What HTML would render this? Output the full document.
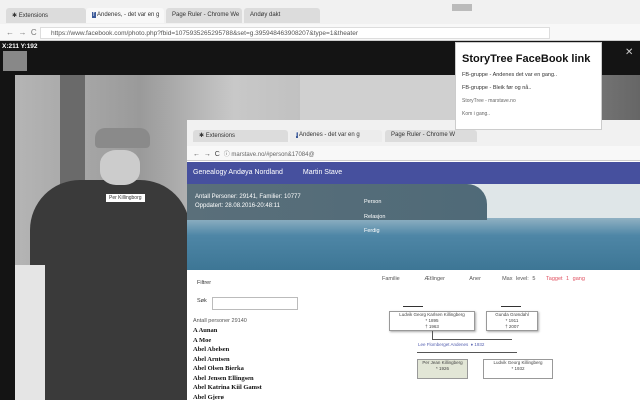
<!DOCTYPE html>
<html><head><style>
*{margin:0;padding:0;box-sizing:border-box}
body{width:640px;height:400px;overflow:hidden;position:relative;background:#141414;font-family:"Liberation Sans",sans-serif;font-size:6px}
.a{position:absolute}
.tab{position:absolute;top:8px;height:15px;background:#dcdcdc;border-radius:3px 3px 0 0;font-size:6px;color:#333;padding:4px 6px;white-space:nowrap;overflow:hidden}
</style></head><body>
<div class="a" style="left:0;top:0;width:640px;height:24px;background:#f1f1f1"></div>
<div class="tab" style="left:6px;width:80px">✱ Extensions</div>
<div class="tab" style="left:86px;width:78px;background:#f8f8f8"><span style="background:#3b5998;color:#fff;padding:0 1px">f</span> Andenes, - det var en g</div>
<div class="tab" style="left:166px;width:76px">Page Ruler - Chrome We</div>
<div class="tab" style="left:244px;width:76px">Andøy dakt</div>
<div class="a" style="left:452px;top:4px;width:20px;height:7px;background:#bbb"></div>
<div class="a" style="left:0;top:24px;width:640px;height:17px;background:#f8f8f8;border-bottom:1px solid #ccc"></div>
<div class="a" style="left:40px;top:27px;width:510px;height:12px;background:#fff;border:1px solid #ddd;font-size:6.5px;color:#555;padding:2px 10px">https://www.facebook.com/photo.php?fbid=1075935265295788&set=g.395948463908207&type=1&theater</div>
<div class="a" style="left:6px;top:28px;font-size:8px;color:#777">←&nbsp;&nbsp;→&nbsp;&nbsp;C</div>
<div class="a" style="left:2px;top:43px;color:#fff;font-size:6.5px;font-weight:bold">X:211 Y:192</div>
<div class="a" style="left:3px;top:51px;width:24px;height:20px;background:#888"></div>
<div class="a" style="left:15px;top:75px;width:625px;height:325px;background:linear-gradient(90deg,#b5b5b5 0,#9a9a9a 20%,#c8c8c8 35%,#bbb 55%,#999 75%,#666 100%)"></div>
<div class="a" style="left:60px;top:75px;width:25px;height:110px;background:#6a6a6a"></div>
<div class="a" style="left:300px;top:75px;width:160px;height:45px;background:#d0d0d0"></div>
<div class="a" style="left:30px;top:180px;width:160px;height:220px;background:#3a3a3a;border-radius:50px 50px 0 0"></div>
<div class="a" style="left:100px;top:150px;width:40px;height:35px;background:#ccc;border-radius:40%"></div>
<div class="a" style="left:95px;top:128px;width:55px;height:20px;background:#8a8a8a;border-radius:10px 10px 4px 4px"></div>
<div class="a" style="left:15px;top:265px;width:30px;height:135px;background:#e5e5e5"></div>
<div class="a" style="left:106px;top:194px;background:#fff;font-size:5px;padding:1px 3px;color:#333">Per Killingborg</div>
<div class="a" style="left:625px;top:47px;color:#ccc;font-size:10px">✕</div>
<div class="a" style="left:187px;top:120px;width:453px;height:280px;background:#fff;overflow:hidden">
 <div class="a" style="left:0;top:0;width:453px;height:26px;background:#f1f1f1"></div>
 <div class="tab" style="top:10px;left:6px;width:95px;height:12px;padding:2px 6px">✱ Extensions</div>
 <div class="tab" style="top:10px;left:103px;width:92px;height:12px;padding:2px 6px;background:#ececec"><span style="background:#3b5998;color:#fff">f</span> Andenes - det var en g</div>
 <div class="tab" style="top:10px;left:198px;width:92px;height:12px;padding:2px 6px">Page Ruler - Chrome W</div>
 <div class="a" style="left:0;top:26px;width:453px;height:15px;background:#f8f8f8;border-bottom:1px solid #ccc;font-size:7px;color:#444;padding:3px 6px">←&nbsp;&nbsp;→&nbsp;&nbsp;C&nbsp;&nbsp;<span style="font-size:6px;color:#666">ⓘ marstave.no/#person&17084@</span></div>
 <div class="a" style="left:0;top:42px;width:453px;height:22px;background:#46509e;color:#fff;font-size:7px;padding:7px 6px">Genealogy Andøya Nordland<span style="margin-left:20px">Martin Stave</span></div>
 <div class="a" style="left:0;top:64px;width:453px;height:86px;background:linear-gradient(180deg,#6a8ea8 0,#8fb0c2 40%,#4e86a6 60%,#3d7695 100%)"></div>
 <div class="a" style="left:240px;top:64px;width:213px;height:34px;background:#dfe6e8"></div>
 <div class="a" style="left:0;top:64px;width:300px;height:36px;background:linear-gradient(90deg,#5a6f7a,#4f6a78);border-radius:0 20px 0 0"></div>
 <div class="a" style="left:8px;top:73px;color:#fff;font-size:6px;line-height:9px">Antall Personer: 29141, Familier: 10777<br>Oppdatert: 28.08.2016-20:48:11</div>
 <div class="a" style="left:177px;top:75px;color:#fff;font-size:5.5px;line-height:14.5px">Person<br>Relasjon<br>Ferdig</div>
 <div class="a" style="left:0;top:150px;width:453px;height:130px;background:#fff"></div>
 <div class="a" style="left:10px;top:160px;font-size:5.5px;color:#333">Filtrer</div>
 <div class="a" style="left:10px;top:178px;font-size:5.5px;color:#333">Søk</div>
 <div class="a" style="left:25px;top:177px;width:86px;height:13px;border:1px solid #bbb"></div>
 <div class="a" style="left:6px;top:198px;font-size:5.5px;color:#555">Antall personer 29140</div>
 <div class="a" style="left:6px;top:206px;font-family:'Liberation Serif',serif;font-weight:bold;font-size:6.5px;line-height:9.5px;color:#111">A Aunan<br>A Moe<br>Abel Abelsen<br>Abel Arntsen<br>Abel Olsen Bierka<br>Abel Jensen Ellingsen<br>Abel Katrina Kiil Gamst<br>Abel Gjerø</div>
 <div class="a" style="left:195px;top:156px;font-size:5.5px;color:#555;word-spacing:2px">Familie&nbsp;&nbsp;&nbsp;&nbsp;&nbsp;&nbsp; Ætlinger&nbsp;&nbsp;&nbsp;&nbsp;&nbsp;&nbsp; Aner&nbsp;&nbsp;&nbsp;&nbsp;&nbsp; Max level: 5 &nbsp;&nbsp;<span style="color:#e05060">Tagget 1 gang</span></div>
 <div class="a" style="left:216px;top:186px;width:20px;height:1px;background:#333"></div>
 <div class="a" style="left:314px;top:186px;width:20px;height:1px;background:#333"></div>
 <div class="a" style="left:202px;top:191px;width:86px;height:20px;border:1px solid #999;box-shadow:1px 1px 2px #aaa;font-size:4.5px;text-align:center;color:#444;line-height:6px">Ludvik Georg Karlsen Killingberg<br>* 1895<br>† 1963</div>
 <div class="a" style="left:299px;top:191px;width:52px;height:20px;border:1px solid #999;box-shadow:1px 1px 2px #aaa;font-size:4.5px;text-align:center;color:#444;line-height:6px">Gunda Grøndahl<br>* 1911<br>† 2007</div>
 <div class="a" style="left:245px;top:211px;width:1px;height:8px;background:#555"></div>
 <div class="a" style="left:245px;top:219px;width:80px;height:1px;background:#555"></div>
 <div class="a" style="left:231px;top:222px;font-size:4.5px;color:#5560b0">Lee Flomberget Andenes&nbsp; ♦ 1932</div>
 <div class="a" style="left:230px;top:232px;width:100px;height:1px;background:#555"></div>
 <div class="a" style="left:230px;top:239px;width:51px;height:20px;border:1px solid #999;background:#e2e6d6;font-size:4.5px;text-align:center;color:#444;line-height:6px">Per Jean Killingberg<br>* 1926</div>
 <div class="a" style="left:296px;top:239px;width:70px;height:20px;border:1px solid #999;font-size:4.5px;text-align:center;color:#444;line-height:6px">Ludvik Georg Killingberg<br>* 1932</div>
</div>
<div class="a" style="left:455px;top:42px;width:147px;height:88px;background:#fff;border:1px solid #ccc;padding:10px 6px;color:#333">
<div style="font-size:11px;font-weight:bold;color:#111;margin-bottom:7px">StoryTree FaceBook link</div>
<div style="font-size:5.5px;margin-bottom:7px">FB-gruppe - Andenes det var en gang..</div>
<div style="font-size:5.5px;margin-bottom:7px">FB-gruppe - Bleik før og nå..</div>
<div style="font-size:5px;color:#666;margin-bottom:7px">StoryTree - marstave.no</div>
<div style="font-size:5px;color:#666">Kom i gang..</div></div>
</body></html>
